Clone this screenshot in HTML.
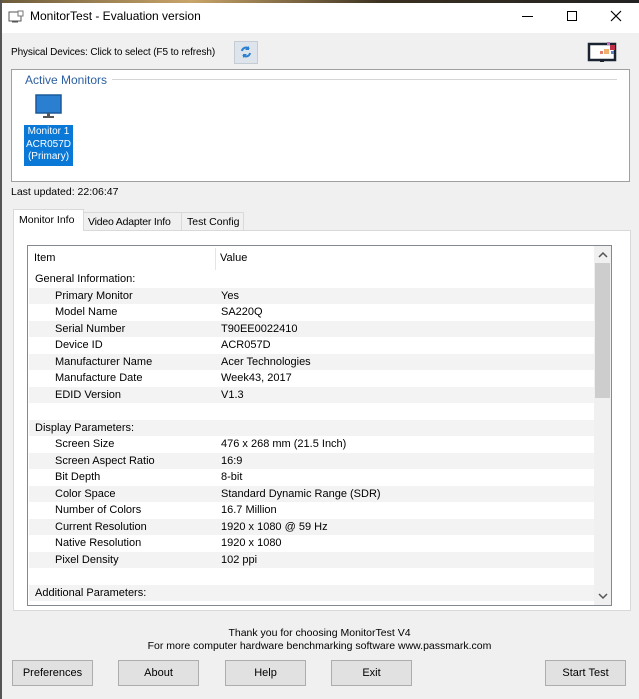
<!DOCTYPE html>
<html><head><meta charset="utf-8"><style>
*{box-sizing:border-box;margin:0;padding:0}
body{width:639px;height:699px;background:#f0f0f0;font-family:"Liberation Sans",sans-serif;font-size:11px;color:#000;position:relative;overflow:hidden}
.a{position:absolute;white-space:nowrap}
.btn{position:absolute;top:660px;height:26px;width:81px;background:#e1e1e1;border:1px solid #adadad;text-align:center;line-height:24px;font-size:11px}
.row{position:absolute;left:1px;width:566px;height:16.5px;line-height:16.5px;white-space:nowrap}
.g{background:#f3f3f3}
.k{position:absolute;left:26px}
.v{position:absolute;left:192px}
.h{position:absolute;left:6px}
</style></head><body>
<div class="a" style="left:0;top:0;width:639px;height:3px;background:linear-gradient(90deg,#6b5a3a,#c9a56a 30%,#3a3020 60%,#222)"></div>
<div class="a" style="left:0;top:0;width:2px;height:699px;background:#555"></div>
<div class="a" style="left:2px;top:3px;width:637px;height:30px;background:#fff"></div>
<svg class="a" style="left:8px;top:10px" width="16" height="14"><rect x="1" y="2" width="12" height="9" fill="none" stroke="#555"/><rect x="10" y="1" width="5" height="5" fill="#fff" stroke="#777"/><line x1="4" y1="12" x2="10" y2="12" stroke="#555"/></svg>
<div class="a" style="left:30px;top:9px;font-size:12px">MonitorTest - Evaluation version</div>
<div class="a" style="left:522px;top:16px;width:11px;height:1px;background:#000"></div>
<div class="a" style="left:567px;top:11px;width:10px;height:10px;border:1px solid #000"></div>
<svg class="a" style="left:610px;top:10px" width="12" height="12"><path d="M1 1L11 11M11 1L1 11" stroke="#000" stroke-width="1.2"/></svg>

<div class="a" style="left:11px;top:47px;font-size:10px;letter-spacing:-0.1px">Physical Devices: Click to select (F5 to refresh)</div>
<div class="a" style="left:234px;top:41px;width:24px;height:23px;background:#dde4ec;border:1px solid #c5ccd4"></div>
<svg class="a" style="left:239px;top:45px" width="14" height="14"><path d="M3 6a4 4 0 0 1 7-2M11 8a4 4 0 0 1-7 2" fill="none" stroke="#2a7fd0" stroke-width="2"/><path d="M10 1v4h-4z M4 13v-4h4z" fill="#2a7fd0"/></svg>
<svg class="a" style="left:586px;top:38px" width="36" height="26"><rect x="3" y="6" width="26" height="16" fill="#fff" stroke="#1a2430" stroke-width="2.5"/><rect x="14" y="22" width="4" height="2" fill="#1a2430"/><rect x="18" y="11" width="5" height="5" fill="#f0b070"/><rect x="24" y="7" width="5" height="5" fill="#c0304a"/><rect x="21" y="4" width="3" height="3" fill="#c070c0"/><rect x="25" y="13" width="3" height="3" fill="#6080c0"/><rect x="14" y="13" width="3" height="3" fill="#e08070"/></svg>

<div class="a" style="left:11px;top:69px;width:619px;height:113px;background:#fff;border:1px solid #a0a0a0"></div>
<div class="a" style="left:25px;top:73px;color:#2c5fa0;font-size:12px">Active Monitors</div>
<div class="a" style="left:112px;top:79px;width:505px;height:2px;border-top:1px solid #d5d5d5;border-bottom:1px solid #fff"></div>
<svg class="a" style="left:34px;top:93px" width="30" height="28"><rect x="2" y="2" width="25" height="18" fill="#2a7fd0" stroke="#1a5a9a" stroke-width="1.5"/><rect x="13" y="20" width="3" height="3" fill="#555"/><rect x="9" y="23" width="11" height="2" fill="#555"/></svg>
<div class="a" style="left:24px;top:125px;width:49px;height:41px;background:#0a78d7;color:#fff;text-align:center;line-height:12.5px;padding-top:1px;font-size:10px">Monitor 1<br>ACR057D<br>(Primary)</div>
<div class="a" style="left:11px;top:186px;font-size:10.5px">Last updated: 22:06:47</div>

<div class="a" style="left:13px;top:230px;width:618px;height:381px;background:#fff;border:1px solid #d9d9d9"></div>
<div class="a" style="left:13px;top:209px;width:71px;height:22px;background:#fff;border:1px solid #d9d9d9;border-bottom:none;padding:4px 0 0 5px;font-size:10.5px">Monitor Info</div>
<div class="a" style="left:83px;top:212px;width:99px;height:19px;background:#f0f0f0;border:1px solid #d9d9d9;padding:3px 0 0 4px;font-size:10.5px;letter-spacing:-0.2px">Video Adapter Info</div>
<div class="a" style="left:181px;top:212px;width:63px;height:19px;background:#f0f0f0;border:1px solid #d9d9d9;padding:3px 0 0 5px;font-size:10.5px">Test Config</div>

<div class="a" style="left:27px;top:245px;width:585px;height:361px;background:#fff;border:1px solid #828790;overflow:hidden">
 <div class="a" style="left:0;top:0;width:567px;height:25px;line-height:25px"><span class="h">Item</span><span class="v" style="left:192px">Value</span></div>
 <div class="a" style="left:187px;top:2px;width:1px;height:22px;background:#e5e5e5"></div>
 <div style="position:absolute;left:0;top:25px">
 <div class="row" style="top:0"><span class="h">General Information:</span></div>
 <div class="row g" style="top:16.5px"><span class="k">Primary Monitor</span><span class="v">Yes</span></div>
 <div class="row" style="top:33px"><span class="k">Model Name</span><span class="v">SA220Q</span></div>
 <div class="row g" style="top:49.5px"><span class="k">Serial Number</span><span class="v">T90EE0022410</span></div>
 <div class="row" style="top:66px"><span class="k">Device ID</span><span class="v">ACR057D</span></div>
 <div class="row g" style="top:82.5px"><span class="k">Manufacturer Name</span><span class="v">Acer Technologies</span></div>
 <div class="row" style="top:99px"><span class="k">Manufacture Date</span><span class="v">Week43, 2017</span></div>
 <div class="row g" style="top:115.5px"><span class="k">EDID Version</span><span class="v">V1.3</span></div>
 <div class="row" style="top:132px"></div>
 <div class="row g" style="top:148.5px"><span class="h">Display Parameters:</span></div>
 <div class="row" style="top:165px"><span class="k">Screen Size</span><span class="v">476 x 268 mm (21.5 Inch)</span></div>
 <div class="row g" style="top:181.5px"><span class="k">Screen Aspect Ratio</span><span class="v">16:9</span></div>
 <div class="row" style="top:198px"><span class="k">Bit Depth</span><span class="v">8-bit</span></div>
 <div class="row g" style="top:214.5px"><span class="k">Color Space</span><span class="v">Standard Dynamic Range (SDR)</span></div>
 <div class="row" style="top:231px"><span class="k">Number of Colors</span><span class="v">16.7 Million</span></div>
 <div class="row g" style="top:247.5px"><span class="k">Current Resolution</span><span class="v">1920 x 1080 @ 59 Hz</span></div>
 <div class="row" style="top:264px"><span class="k">Native Resolution</span><span class="v">1920 x 1080</span></div>
 <div class="row g" style="top:280.5px"><span class="k">Pixel Density</span><span class="v">102 ppi</span></div>
 <div class="row" style="top:297px"></div>
 <div class="row g" style="top:313.5px"><span class="h">Additional Parameters:</span></div>
 </div>
 <div class="a" style="left:566px;top:0;width:17px;height:359px;background:#f0f0f0"></div>
 <div class="a" style="left:567px;top:17px;width:15px;height:135px;background:#cdcdcd"></div>
 <svg class="a" style="left:570px;top:5px" width="10" height="8"><path d="M1 6L5 2L9 6" fill="none" stroke="#555" stroke-width="1.5"/></svg>
 <svg class="a" style="left:570px;top:346px" width="10" height="8"><path d="M1 2L5 6L9 2" fill="none" stroke="#555" stroke-width="1.5"/></svg>
</div>

<div class="a" style="left:0;top:627px;width:639px;text-align:center;line-height:13px;font-size:10.5px">Thank you for choosing MonitorTest V4<br>For more computer hardware benchmarking software www.passmark.com</div>
<div class="btn" style="left:12px">Preferences</div>
<div class="btn" style="left:118px">About</div>
<div class="btn" style="left:225px">Help</div>
<div class="btn" style="left:331px">Exit</div>
<div class="btn" style="left:545px">Start Test</div>
</body></html>
